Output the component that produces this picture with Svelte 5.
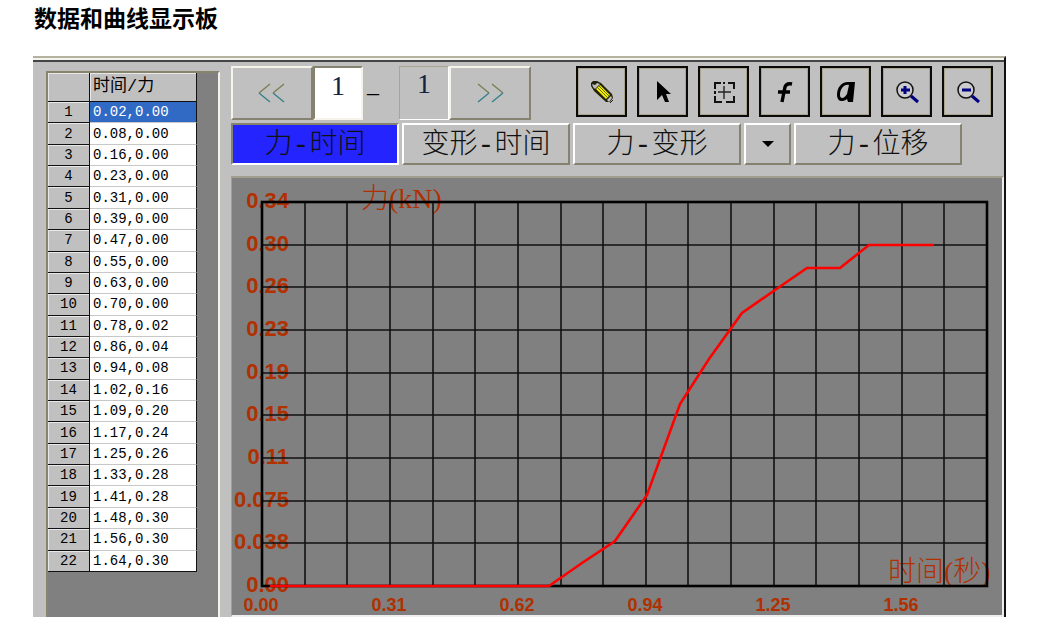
<script>
  const readings = [
    [0.02, 0], [0.08, 0], [0.16, 0], [0.23, 0], [0.31, 0], [0.39, 0], [0.47, 0], [0.55, 0],
    [0.63, 0], [0.7, 0], [0.78, 0.02], [0.86, 0.04], [0.94, 0.08], [1.02, 0.16], [1.09, 0.2],
    [1.17, 0.24], [1.25, 0.26], [1.33, 0.28], [1.41, 0.28], [1.48, 0.3], [1.56, 0.3], [1.64, 0.3]
  ];
  const yLabels = ['0.34', '0.30', '0.26', '0.23', '0.19', '0.15', '0.11', '0.075', '0.038', '0.00'];
  const xLabels = ['0.00', '0.31', '0.62', '0.94', '1.25', '1.56'];

  // plot area inside the chart's view box
  const left = 30;
  const right = 755;
  const top = 24;
  const bottom = 408;
  const gx = (i) => Math.round(left + ((right - left) * i) / 17);
  const gy = (i) => Math.round(top + ((bottom - top) * i) / 9);
  const curve = readings
    .map(([t, f]) => `${Math.round(left + t * 410)},${Math.round(bottom - f * 1137)}`)
    .join(' ');

  let selected = $state(0);
  let page = $state('1');
  let mode = $state('力-时间');
</script>

<main>
  <h1>数据和曲线显示板</h1>
  <section class="panel">
    <div class="list">
      <table>
        <thead>
          <tr><th></th><th class="name">时间/力</th></tr>
        </thead>
        <tbody>
          {#each readings as [t, f], i}
            <tr class:selected={selected === i} onclick={() => (selected = i)}>
              <th>{i + 1}</th>
              <td>{t.toFixed(2)},{f.toFixed(2)}</td>
            </tr>
          {/each}
        </tbody>
      </table>
    </div>

    <div class="work">
      <div class="bar">
        <button class="step" aria-label="上一条">
          <svg width="28" height="20" viewBox="0 0 28 20">
            <path class="warm" d="M12 1 1 10M26 1 15 10" /><path d="m1 10 11 9M15 10l11 9" />
          </svg>
        </button>
        <input class="page" aria-label="当前" bind:value={page} />
        <span class="dash">–</span>
        <output class="page total">1</output>
        <button class="step" aria-label="下一条">
          <svg width="28" height="20" viewBox="0 0 28 20">
            <path class="warm" d="m2 1 11 9M16 1l11 9" /><path d="M13 10 2 19M27 10l-11 9" />
          </svg>
        </button>
        <div class="tools">
          <button class="tool" aria-label="画笔">
            <svg viewBox="0 0 26 26">
              <path d="M2 4 4 2h4l4 2 11 11 1 4-3 4h-4L5 12 2 7z" fill="#22220a" />
              <path d="m3 5 3 1 2-2 3 1-5 5-2-2z" fill="#bbb" />
              <path d="m7 10 4-4 10 10-4 4z" fill="#f4ee00" />
              <path d="m8 8 11 11M10 7l10 10" stroke="#6a6800" stroke-width="1" />
              <path d="m18 21 4-4 1 2-3 4z" fill="#c0c0c0" />
              <path d="m21 24 3-3" stroke="#222" stroke-width="1" />
            </svg>
          </button>
          <button class="tool" aria-label="选择">
            <svg viewBox="0 0 26 26"><path d="M7 2v19l5-5 3 7h4l-3-8h5z" fill="#000" /></svg>
          </button>
          <button class="tool" aria-label="居中">
            <svg viewBox="0 0 26 26">
              <path d="M4 10V4h6M17 4h6v6M23 17v6h-8M11 23H4v-6M4 12v3M12 4h2" fill="none" stroke="#111" stroke-width="2" />
              <path d="M7 13h13M13 7v13" stroke="#222" stroke-width="1.4" />
            </svg>
          </button>
          <button class="tool" aria-label="函数">
            <svg viewBox="0 0 26 26">
              <path d="M20 5c-4-1-6 0-7 3l-3 15M6 13h12" fill="none" stroke="#000" stroke-width="3.4" />
            </svg>
          </button>
          <button class="tool" aria-label="文字">
            <svg viewBox="0 0 26 26">
              <path d="M22 3h-7C8 3 4 9 4 16c0 6 5 8 10 4l1 3h5zM16 6l-2 9c-3 5-7 5-7 1 0-6 4-11 9-10z" fill="#000" fill-rule="evenodd" />
            </svg>
          </button>
          {#each ['放大', '缩小'] as name, i}
            <button class="tool" aria-label={name}>
              <svg viewBox="0 0 26 26">
                <circle cx="11" cy="11" r="8" fill="#ccc" stroke="#111" stroke-width="1.5" />
                <path d={i ? 'M7 11h9' : 'M7 11h9M11 7v8'} stroke="#000080" stroke-width="3" />
                <path d="m17 17 7 6" stroke="#000080" stroke-width="3" />
              </svg>
            </button>
          {/each}
        </div>
      </div>

      <div class="tabs">
        {#each ['力-时间', '变形-时间', '力-变形'] as name}
          <button class="tab" class:active={mode === name} onclick={() => (mode = name)}>{name}</button>
        {/each}
        <button class="tab drop" aria-label="更多"><span class="arrow"></span></button>
        <button class="tab" class:active={mode === '力-位移'} onclick={() => (mode = '力-位移')}>力-位移</button>
      </div>

      <div class="chart">
        <svg viewBox="0 0 770 437">
          <g class="y">
            {#each yLabels as label, i}
              <text x="57" y={gy(i) + 6}>{label}</text>
            {/each}
          </g>
          <g class="x">
            {#each xLabels as label, i}
              <text x={gx(i * 3) - 1} y="433">{label}</text>
            {/each}
          </g>
          <text class="axis" x="129" y="30">力(kN)</text>
          <text class="axis" x="656" y="403">时间(秒)</text>
          <g class="grid">
            {#each { length: 16 } as _, i}
              <path d="M{gx(i + 1)} {top}V{bottom}" />
            {/each}
            {#each { length: 8 } as _, i}
              <path d="M{left} {gy(i + 1)}H{right}" />
            {/each}
          </g>
          <rect class="frame" x={left} y={top} width={right - left} height={bottom - top} />
          <polyline class="curve" points={curve} />
        </svg>
      </div>
    </div>
  </section>
</main>

<style>
  :global(body) {
    background: #fff;
  }
  main {
    padding: 0 53px 0 33px;
  }
  h1 {
    margin: 0;
    padding: 6px 1px 0;
    height: 50px;
    box-sizing: border-box;
    font: bold 23px/28px 'Liberation Serif', 'Noto Sans CJK SC', serif;
    color: #000;
  }
  .panel {
    display: flex;
    gap: 11px;
    margin-top: 6px;
    padding: 5px 0 0 13px;
    background: #c0c0c0;
    border-top: 2px solid #b5b29f;
    border-right: 2px solid #111;
    box-shadow: inset 0 2px #f4f4f0, inset 0 4px #444;
  }
  .list {
    flex: none;
    width: 174px;
    box-sizing: border-box;
    margin-top: 8px;
    background: #808080;
    border: 2px solid #86836f;
    border-right: 2px solid #f4f2ea;
    border-bottom: 0;
  }
  table {
    width: 149px;
    height: 499px;
    border-collapse: separate;
    border-spacing: 0;
    table-layout: fixed;
    font: 14px/16px 'Liberation Mono', 'Noto Sans CJK SC', monospace;
    color: #000;
  }
  th,
  td {
    padding: 0;
    font-weight: normal;
  }
  th {
    background: #c0c0c0;
    border-right: 1px solid #111;
    border-bottom: 1px solid #111;
    box-shadow: inset 1px 1px #e8e8e8;
  }
  th:first-child {
    width: 41px;
  }
  thead th {
    height: 28px;
  }
  .name {
    padding-left: 3px;
    text-align: left;
    font-size: 17px;
  }
  td {
    padding-left: 3px;
    background: #fff;
    border-right: 1px solid #111;
    border-bottom: 1px solid #c8c8c8;
  }
  tr:last-child td {
    border-bottom-color: #111;
  }
  .selected td {
    background: #316ac5;
    color: #fff;
  }
  .work {
    flex: 1;
    min-width: 0;
  }
  button,
  input {
    margin: 0;
    padding: 0;
    box-sizing: border-box;
    border-radius: 0;
  }
  .bar {
    display: flex;
    align-items: flex-start;
    margin-top: 3px;
    height: 54px;
  }
  .step {
    width: 82px;
    height: 54px;
    background: #c0c0c0;
    border: 2px solid;
    border-color: #f6f4ea #85826f #85826f #f6f4ea;
  }
  .step svg {
    vertical-align: middle;
    fill: none;
    stroke: #35808c;
    stroke-width: 1.4;
  }
  .step .warm {
    stroke: #7a7f55;
  }
  .page {
    width: 50px;
    height: 54px;
    padding: 0 0 14px;
    box-sizing: border-box;
    background: #fff;
    border: 2px solid;
    border-color: #85826f #f6f4ea #f6f4ea #85826f;
    font: 28px/34px 'Liberation Serif', serif;
    text-align: center;
    color: #124;
  }
  .total {
    background: #c0c0c0;
    border-width: 1px;
    border-color: #aaa593 #fff #fff #aaa593;
  }
  .dash {
    width: 36px;
    padding-left: 4px;
    box-sizing: border-box;
    font: 24px/52px 'Liberation Serif', serif;
    color: #000;
  }
  .tools {
    display: flex;
    gap: 10px;
    margin-left: auto;
    padding-right: 11px;
  }
  .tool {
    width: 51px;
    height: 51px;
    background: #c0c0c0;
    border: 2px solid #0a0a0a;
    box-shadow: inset 0 0 0 1px #aaa48e;
  }
  .tool svg {
    width: 26px;
    height: 26px;
    vertical-align: middle;
  }
  .tabs {
    display: flex;
    gap: 3px;
    margin-top: 3px;
  }
  .tab {
    width: 168px;
    height: 42px;
    padding-top: 3px;
    background: #c0c0c0;
    border: 2px solid;
    border-color: #fff #85826f #85826f #fff;
    font: 300 28px/34px 'Liberation Mono', 'Noto Sans CJK SC', monospace;
    color: #111;
  }
  .active {
    background: #2424ff;
    border-color: #85826f #fff #fff #85826f;
  }
  .drop {
    width: 47px;
    padding-top: 0;
  }
  .arrow {
    display: inline-block;
    border: 6px solid transparent;
    border-top: 6px solid #000;
    border-bottom: 0;
    vertical-align: middle;
  }
  .chart {
    margin-top: 11px;
    background: #808080;
    border: 2px solid;
    border-color: #a29e8d #eee #eee #a29e8d;
    border-left-width: 1px;
  }
  .chart svg {
    display: block;
    width: 100%;
  }
  .chart text {
    fill: #b03000;
  }
  .y text {
    font: bold 22px 'Liberation Sans', sans-serif;
    text-anchor: end;
  }
  .x text {
    font: bold 18px 'Liberation Sans', sans-serif;
    text-anchor: middle;
  }
  .chart .axis {
    font: 300 28px 'Liberation Serif', 'Noto Sans CJK SC', serif;
  }
  .grid path {
    stroke: #111;
    stroke-width: 1.6;
  }
  .frame {
    fill: none;
    stroke: #000;
    stroke-width: 2.6;
  }
  .curve {
    fill: none;
    stroke: #f00;
    stroke-width: 2.6;
  }
</style>
